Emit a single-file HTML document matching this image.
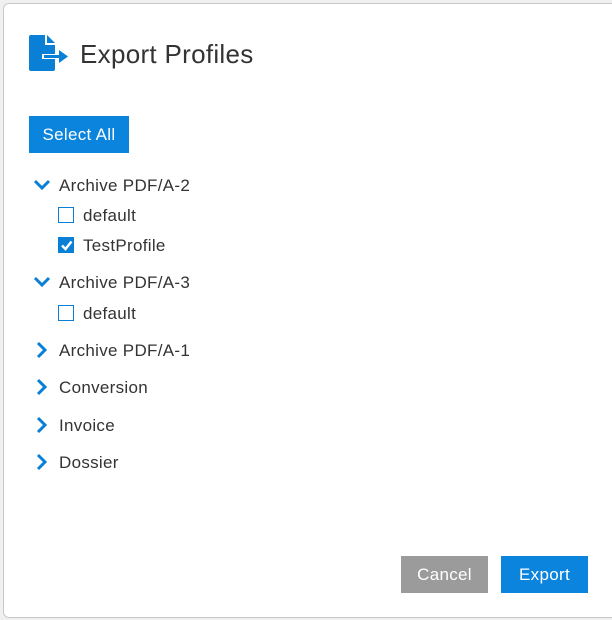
<!DOCTYPE html>
<html><head><style>
body{margin:0;width:612px;height:620px;background:#f0f0f0;font-family:"Liberation Sans",sans-serif;position:relative;overflow:hidden}
.dlg{position:absolute;left:3px;top:3px;width:620px;height:613px;background:#fff;border:1px solid #c8c8c8;border-radius:6px}
.t{position:absolute;color:#333;font-size:17px;line-height:20px;letter-spacing:0.3px}
.btn{position:absolute;color:#fff;font-size:17px;text-align:center;line-height:38px;height:37px;letter-spacing:0.3px}
.cb{position:absolute;width:14px;height:14px;border:1.5px solid #0a7fd6;background:#fff}
svg{position:absolute}
</style></head><body>
<div class="dlg"></div>
<svg style="left:29px;top:35px" width="42" height="36" viewBox="0 0 42 36">
<path d="M0 2 Q0 0 2 0 H16 V10 H26 V34 Q26 36 24 36 H2 Q0 36 0 34Z" fill="#0a7fd6"/>
<path d="M18 0 L26 8 H18Z" fill="#0a7fd6"/>
<rect x="13" y="19" width="14" height="5" fill="#fff"/>
<path d="M15 20 H30 V15 L39 21.5 L30 28 V23 H15Z" fill="#0a7fd6"/>
</svg>
<div class="t" style="left:80px;top:39px;font-size:26px;line-height:30px">Export Profiles</div>
<div class="btn" style="left:29px;top:116px;width:100px;background:#0a84dc">Select All</div>

<svg style="left:33px;top:179px" width="18" height="12"><path d="M2 2 L9 9 L16 2" stroke="#0a7fd6" stroke-width="3" fill="none"/></svg>
<div class="t" style="left:59px;top:176px">Archive PDF/A-2</div>
<div class="cb" style="left:58px;top:207px"></div>
<div class="t" style="left:83px;top:206px">default</div>
<div class="cb" style="left:58px;top:237px;background:#0a7fd6"></div>
<svg style="left:58px;top:237px" width="17" height="17"><path d="M4 8.5 L7.5 12 L13.5 4.5" stroke="#fff" stroke-width="2.5" fill="none"/></svg>
<div class="t" style="left:83px;top:236px">TestProfile</div>

<svg style="left:33px;top:276px" width="18" height="12"><path d="M2 2 L9 9 L16 2" stroke="#0a7fd6" stroke-width="3" fill="none"/></svg>
<div class="t" style="left:59px;top:273px">Archive PDF/A-3</div>
<div class="cb" style="left:58px;top:305px"></div>
<div class="t" style="left:83px;top:304px">default</div>

<svg style="left:36px;top:341px" width="12" height="18"><path d="M2 2 L9 9 L2 16" stroke="#0a7fd6" stroke-width="3" fill="none"/></svg>
<div class="t" style="left:59px;top:341px">Archive PDF/A-1</div>
<svg style="left:36px;top:378px" width="12" height="18"><path d="M2 2 L9 9 L2 16" stroke="#0a7fd6" stroke-width="3" fill="none"/></svg>
<div class="t" style="left:59px;top:378px">Conversion</div>
<svg style="left:36px;top:416px" width="12" height="18"><path d="M2 2 L9 9 L2 16" stroke="#0a7fd6" stroke-width="3" fill="none"/></svg>
<div class="t" style="left:59px;top:416px">Invoice</div>
<svg style="left:36px;top:453px" width="12" height="18"><path d="M2 2 L9 9 L2 16" stroke="#0a7fd6" stroke-width="3" fill="none"/></svg>
<div class="t" style="left:59px;top:453px">Dossier</div>

<div class="btn" style="left:401px;top:556px;width:87px;background:#9b9b9b">Cancel</div>
<div class="btn" style="left:501px;top:556px;width:87px;background:#0a84dc">Export</div>
</body></html>
